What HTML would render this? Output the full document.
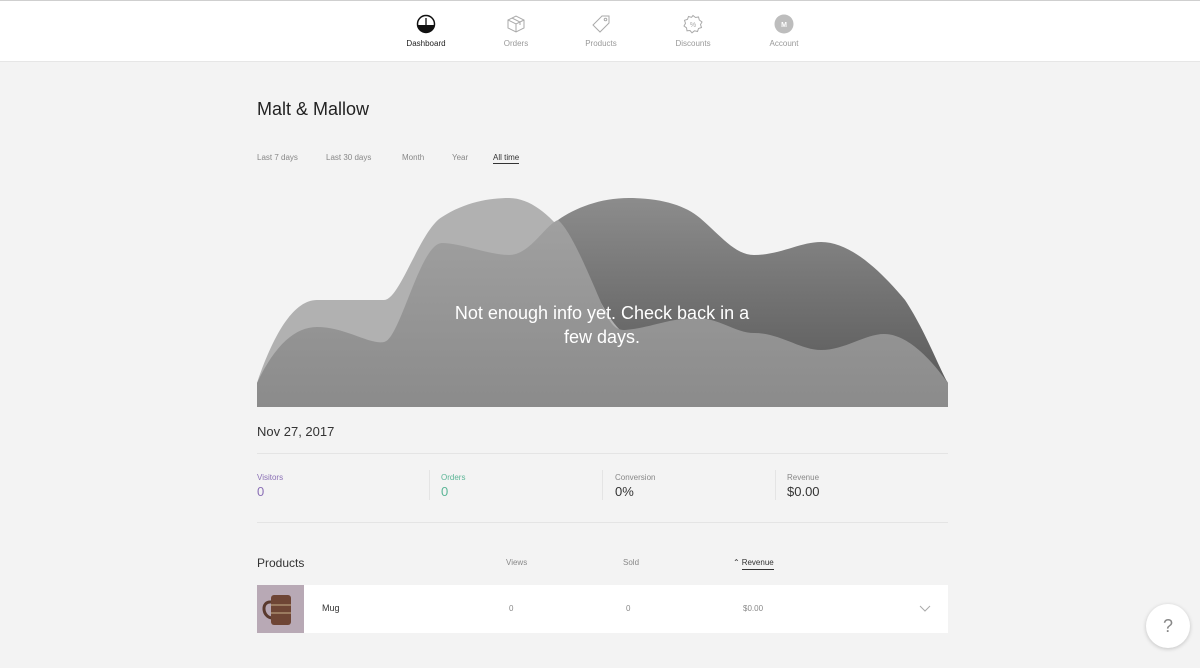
<!DOCTYPE html>
<html><head><meta charset="utf-8"><style>
*{margin:0;padding:0;box-sizing:border-box}
body{width:1200px;height:668px;background:#f3f3f3;font-family:"Liberation Sans",sans-serif;position:relative;overflow:hidden;color:#333}
.nav{position:absolute;left:0;top:0;width:1200px;height:62px;background:#fff;border-top:1px solid #cfcfcf;border-bottom:1px solid #e6e6e6}
.ni{position:absolute;top:13px;width:80px;margin-left:-40px;text-align:center;font-size:8px;color:#999}
.ni svg{display:block;margin:0 auto 5px;width:20px;height:20px}
.t{position:absolute;white-space:nowrap}
.sm{font-size:8px;color:#888}
</style></head><body>
<div class="nav">
 <div class="ni" style="left:426px;color:#222"><svg viewBox="0 0 20 20"><circle cx="10" cy="10" r="8.5" fill="#fff" stroke="#111" stroke-width="1.5"/><path d="M1.6 11 H18.4 A8.5 8.5 0 0 1 1.6 11Z" fill="#111"/><path d="M10 4V11" stroke="#111" stroke-width="1.3"/></svg>Dashboard</div>
 <div class="ni" style="left:516px"><svg viewBox="0 0 20 20" fill="none" stroke="#aaa" stroke-width="1"><path d="M2 6L10 2L18 6V14L10 18L2 14Z M2 6L10 10L18 6 M10 10V18 M6 4L14 8V11"/></svg>Orders</div>
 <div class="ni" style="left:601px"><svg viewBox="0 0 20 20" fill="none" stroke="#aaa" stroke-width="1"><path d="M11 2H18V9L9 18L2 11Z"/><circle cx="14.5" cy="5.5" r="1.3"/></svg>Products</div>
 <div class="ni" style="left:693px"><svg viewBox="0 0 20 20" fill="none" stroke="#aaa" stroke-width="1"><path d="M10 1.5L12.5 3.5L15.5 3L16.3 6L19 8L17.5 10.5L18.5 13.5L15.5 14.5L14.5 17.5L11.5 16.8L9 18.8L7 16.5L4 16.8L3.5 13.8L1 12L2.5 9.3L1.5 6.3L4.5 5.3L5.5 2.5L8.5 3.3Z"/><text x="10" y="13" font-size="7" text-anchor="middle" fill="#aaa" stroke="none" font-family="Liberation Sans">%</text></svg>Discounts</div>
 <div class="ni" style="left:784px"><svg viewBox="0 0 20 20"><circle cx="10" cy="10" r="9.5" fill="#bdbdbd"/><text x="10" y="13" font-size="7" font-weight="bold" text-anchor="middle" fill="#fff" font-family="Liberation Sans">M</text></svg>Account</div>
</div>

<div class="t" style="left:257px;top:99px;font-size:18px;color:#222">Malt &amp; Mallow</div>
<div class="t sm" style="left:257px;top:153px">Last 7 days</div>
<div class="t sm" style="left:326px;top:153px">Last 30 days</div>
<div class="t sm" style="left:402px;top:153px">Month</div>
<div class="t sm" style="left:452px;top:153px">Year</div>
<div class="t sm" style="left:493px;top:153px;color:#333;border-bottom:1px solid #333;padding-bottom:1px">All time</div>

<svg class="t" style="left:0;top:0" width="1200" height="420" viewBox="0 0 1200 420">
<defs>
<linearGradient id="gd" x1="0" y1="0" x2="0" y2="1"><stop offset="0" stop-color="#8c8c8c"/><stop offset="1" stop-color="#555"/></linearGradient>
<linearGradient id="gf" x1="0" y1="0" x2="0" y2="1"><stop offset="0" stop-color="#a0a0a0"/><stop offset="1" stop-color="#8b8b8b"/></linearGradient>
</defs>
<path d="M540 407 L558 220 C575 208 600 198 629 198 C660 198 685 205 700 218 C720 235 735 255 754 255 C780 255 800 242 821 242 C850 242 880 270 905 300 C925 330 940 370 948 383 V407Z" fill="url(#gd)"/>
<path d="M257 383 C275 330 295 300 317 300 H384 C400 300 420 230 442 217 C465 202 490 198 509 198 C530 198 550 215 565 235 C585 265 600 310 620 330 L620 407 H257Z" fill="#b1b1b1"/>
<path d="M257 383 C275 345 295 327 317 327 C345 327 370 345 384 342 C400 340 420 243 442 243 C460 243 490 255 509 255 C530 255 545 225 558 220 C570 230 585 265 600 300 C610 325 615 330 625 330 C650 328 670 318 696 318 C720 318 735 333 754 333 C780 333 800 350 821 350 C845 350 865 334 884 334 C910 334 935 365 948 383 V407 H257Z" fill="url(#gf)"/>
<text x="602" y="319" text-anchor="middle" fill="#fff" font-size="18" font-family="Liberation Sans">Not enough info yet. Check back in a</text>
<text x="602" y="343" text-anchor="middle" fill="#fff" font-size="18" font-family="Liberation Sans">few days.</text>
</svg>

<div class="t" style="left:257px;top:424px;font-size:13px;color:#333">Nov 27, 2017</div>
<div class="t" style="left:257px;top:453px;width:691px;border-top:1px solid #e4e4e4"></div>
<div class="t" style="left:257px;top:522px;width:691px;border-top:1px solid #e4e4e4"></div>
<div class="t" style="left:429px;top:470px;height:30px;border-left:1px solid #e4e4e4"></div>
<div class="t" style="left:602px;top:470px;height:30px;border-left:1px solid #e4e4e4"></div>
<div class="t" style="left:775px;top:470px;height:30px;border-left:1px solid #e4e4e4"></div>
<div class="t sm" style="left:257px;top:473px;color:#8a6fb5">Visitors</div>
<div class="t" style="left:257px;top:484px;font-size:13px;color:#8a6fb5">0</div>
<div class="t sm" style="left:441px;top:473px;color:#5bb596">Orders</div>
<div class="t" style="left:441px;top:484px;font-size:13px;color:#5bb596">0</div>
<div class="t sm" style="left:615px;top:473px">Conversion</div>
<div class="t" style="left:615px;top:484px;font-size:13px;color:#333">0%</div>
<div class="t sm" style="left:787px;top:473px">Revenue</div>
<div class="t" style="left:787px;top:484px;font-size:13px;color:#333">$0.00</div>

<div class="t" style="left:257px;top:556px;font-size:12px;color:#333">Products</div>
<div class="t sm" style="left:506px;top:558px">Views</div>
<div class="t sm" style="left:623px;top:558px">Sold</div>
<div class="t sm" style="left:733px;top:558px;color:#333">⌃<span style="border-bottom:1px solid #333;padding-bottom:2px;margin-left:2px">Revenue</span></div>

<div class="t" style="left:257px;top:585px;width:691px;height:48px;background:#fff">
 <svg width="47" height="48" style="position:absolute;left:0;top:0" viewBox="0 0 47 48"><rect width="47" height="48" fill="#b8a9b5"/><path d="M14 17 C4 16 5 32 15 33" fill="none" stroke="#5a3a2e" stroke-width="3"/><rect x="14" y="10" width="20" height="30" rx="3" fill="#6e4535"/><path d="M14 20 H34 M14 28 H34" stroke="#9a7a60" stroke-width="2"/></svg>
 <div class="t" style="left:65px;top:18px;font-size:9px;color:#333">Mug</div>
 <div class="t sm" style="left:252px;top:19px">0</div>
 <div class="t sm" style="left:369px;top:19px">0</div>
 <div class="t sm" style="left:486px;top:19px">$0.00</div>
 <svg class="t" style="left:662px;top:20px" width="12" height="8" viewBox="0 0 12 8"><path d="M1 1L6 6L11 1" fill="none" stroke="#aaa" stroke-width="1"/></svg>
</div>

<div class="t" style="left:1146px;top:604px;width:44px;height:44px;border-radius:50%;background:#fff;box-shadow:0 1px 4px rgba(0,0,0,.2);text-align:center;line-height:44px;font-size:18px;color:#888">?</div>
</body></html>
